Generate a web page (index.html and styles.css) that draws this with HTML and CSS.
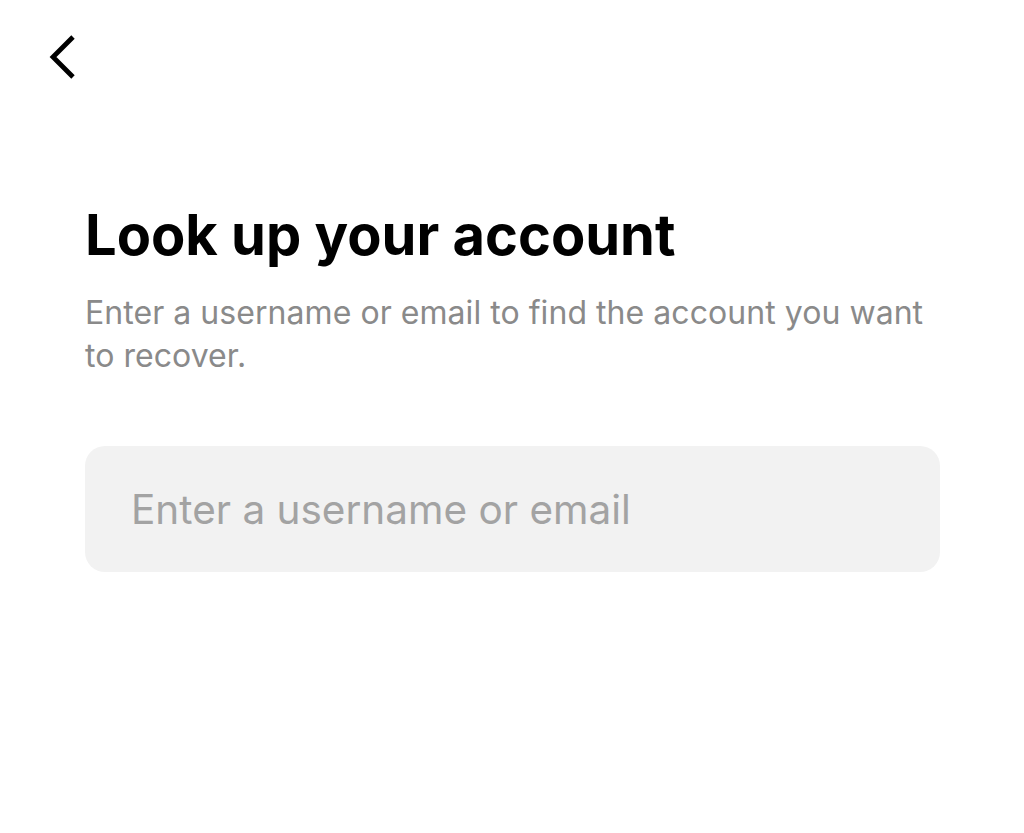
FILE: index.html
```html
<!DOCTYPE html>
<html>
<head>
    <title>Find account</title>
    <link rel="stylesheet" href="styles.css">
</head>
<body>
    <div class="topbar">
        <a href="#" class="back">
            <svg width="40" height="52" viewBox="0 0 40 52">
                <path d="M31 5 L11 25 L31 45" fill="none" stroke="#000" stroke-width="4.8" stroke-linecap="butt" stroke-linejoin="miter"/>
            </svg>
        </a>
    </div>

    <div class="content">
        <h1>Look up your account</h1>
        <p class="hint">Enter a username or email to find the account you want to recover.</p>
        <input type="text" class="field" placeholder="Enter a username or email">
    </div>
</body>
</html>
```

FILE: styles.css
```css
* {
    margin: 0;
    padding: 0;
    box-sizing: border-box;
    font-family: Inter, Roboto, sans-serif;
}

body {
    background: #fff;
}

.topbar {
    padding: 32px 0 0 42px;
    height: 84px;
}
.back {
    display: inline-block;
}

.content {
    padding: 115px 84px 0 85px;
}
.content h1 {
    font-size: 56px;
    font-weight: bold;
    color: #000;
    line-height: 72px;
}
.hint {
    margin-top: 20px;
    font-size: 32px;
    line-height: 43px;
    color: #8a8a8a;
    letter-spacing: 0.05px;
}

.field {
    display: block;
    width: 100%;
    height: 126px;
    margin-top: 69px;
    border: none;
    border-radius: 20px;
    background: #f2f2f2;
    padding: 0 46px;
    font-size: 40.5px;
    color: #000;
    outline: none;
}
.field::placeholder {
    color: #a3a3a3;
}
```
